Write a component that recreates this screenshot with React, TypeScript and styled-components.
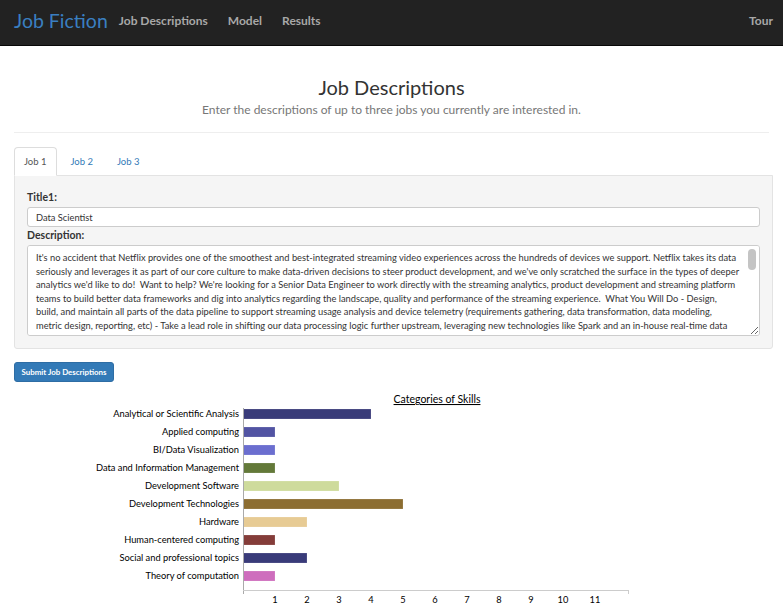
import React, { useState } from "react";
import styled, { createGlobalStyle } from "styled-components";

const Global = createGlobalStyle`
  html, body { margin: 0; padding: 0; background: #fff; }
  body { font-family: Lato, "Open Sans", sans-serif; color: #333; }
  * { box-sizing: border-box; }
`;

const NavBar = styled.nav`
  height: 46px;
  background: #222;
  border-bottom: 1px solid #080808;
  display: flex;
  align-items: center;
  padding: 0 10px 4px 14px;
`;
const Brand = styled.a`
  font-size: 19.5px;
  color: #3a7fc1;
  text-decoration: none;
  margin-right: 1px;
`;
const NavLink = styled.a<{ $right?: boolean }>`
  font-size: 12px;
  font-weight: 700;
  color: #a8a8a8;
  padding: 0 10px;
  text-decoration: none;
  margin-left: ${(p) => (p.$right ? "auto" : "0")};
  &:last-child {
    padding-right: 0;
  }
`;

const Container = styled.main`
  padding: 0 10px 0 14px;
`;
const Header = styled.header`
  text-align: center;
  padding-top: 27px;
  padding-bottom: 13px;
  border-bottom: 1px solid #eee;
  margin-right: 4px;
`;
const Title = styled.h1`
  margin: 0;
  font-size: 20px;
  font-weight: 400;
  line-height: 28px;
  color: #333;
`;
const Subtitle = styled.p`
  margin: 0;
  font-size: 12px;
  line-height: 18px;
  color: #777;
`;

const Tabs = styled.ul`
  list-style: none;
  margin: 14px 0 0;
  padding: 0;
  display: flex;
  height: 28px;
`;
const Tab = styled.li<{ $active?: boolean }>`
  height: 29px;
  padding: 0 9px;
  margin-right: 4px;
  display: flex;
  align-items: center;
  font-size: 9.5px;
  cursor: pointer;
  color: ${(p) => (p.$active ? "#555" : "#337ab7")};
  background: ${(p) => (p.$active ? "#fff" : "transparent")};
  border: 1px solid ${(p) => (p.$active ? "#ddd" : "transparent")};
  border-bottom-color: ${(p) => (p.$active ? "#fff" : "transparent")};
  border-radius: 4px 4px 0 0;
  position: relative;
  z-index: 1;
`;

const Panel = styled.section`
  background: #f5f5f5;
  border: 1px solid #e3e3e3;
  border-radius: 0 0 3px 3px;
  padding: 15px 12px 12px 12px;
  display: flex;
  flex-direction: column;
`;
const Label = styled.label`
  font-size: 10.5px;
  font-weight: 700;
  line-height: 12px;
  color: #333;
  margin-bottom: 4px;
`;
const Input = styled.input`
  height: 20px;
  border: 1px solid #ccc;
  border-radius: 3px;
  background: #fff;
  font-family: Lato, sans-serif;
  font-size: 9.3px;
  color: #333;
  padding: 0 8px;
  margin-bottom: 2px;
  outline: none;
`;
const TextAreaWrap = styled.div`
  position: relative;
  display: flex;
  flex-direction: column;
  &::after {
    content: "";
    position: absolute;
    top: 4px;
    right: 4px;
    width: 8px;
    height: 21px;
    border-radius: 4px;
    background: #c4c4c4;
    pointer-events: none;
  }
`;
const TextArea = styled.textarea`
  height: 91px;
  border: 1px solid #ccc;
  border-radius: 3px;
  background: #fff;
  font-family: Lato, sans-serif;
  font-size: 9.3px;
  line-height: 13.6px;
  color: #333;
  padding: 5px 20px 5px 8px;
  resize: vertical;
  outline: none;
  overflow-y: auto;
`;

const SubmitButton = styled.button`
  margin-top: 13px;
  width: 100px;
  height: 20px;
  background: #337ab7;
  border: 1px solid #2e6da4;
  border-radius: 3px;
  color: #fff;
  font-family: Lato, sans-serif;
  font-size: 7.9px;
  font-weight: 700;
  padding: 0;
`;

const ChartWrap = styled.div`
  margin-top: 6px;
`;

const DESC =
  "It's no accident that Netflix provides one of the smoothest and best-integrated streaming video experiences across the hundreds of devices we support. Netflix takes its data seriously and leverages it as part of our core culture to make data-driven decisions to steer product development, and we've only scratched the surface in the types of deeper analytics we'd like to do!  Want to help? We're looking for a Senior Data Engineer to work directly with the streaming analytics, product development and streaming platform teams to build better data frameworks and dig into analytics regarding the landscape, quality and performance of the streaming experience.  What You Will Do - Design, build, and maintain all parts of the data pipeline to support streaming usage analysis and device telemetry (requirements gathering, data transformation, data modeling, metric design, reporting, etc) - Take a lead role in shifting our data processing logic further upstream, leveraging new technologies like Spark and an in-house real-time data processing framework - Work closely with product managers, data scientists and engineers to understand the data needs of the business.";

const DATA: { label: string; value: number; color: string }[] = [
  { label: "Analytical or Scientific Analysis", value: 4, color: "#393b79" },
  { label: "Applied computing", value: 1, color: "#5254a3" },
  { label: "BI/Data Visualization", value: 1, color: "#6b6ecf" },
  { label: "Data and Information Management", value: 1, color: "#637939" },
  { label: "Development Software", value: 3, color: "#cedb9c" },
  { label: "Development Technologies", value: 5, color: "#8c6d31" },
  { label: "Hardware", value: 2, color: "#e7cb94" },
  { label: "Human-centered computing", value: 1, color: "#843c39" },
  { label: "Social and professional topics", value: 2, color: "#393b79" },
  { label: "Theory of computation", value: 1, color: "#ce6dbd" },
];

function SkillsChart() {
  // svg origin at page x=14, y=388
  const ox = 229; // axis x (243 - 14)
  const unit = 32;
  const top = 26; // first bar center (414 - 388)
  const step = 18;
  const axisY = 202; // 590 - 388
  const ticks = Array.from({ length: 11 }, (_, i) => i + 1);
  return (
    <svg width={640} height={225} style={{ display: "block" }}>
      <text
        x={ox + 194}
        y={15}
        textAnchor="middle"
        fontSize={10.5}
        fontFamily="Lato, sans-serif"
        fill="#000"
        textDecoration="underline"
      >
        Categories of Skills
      </text>
      {DATA.map((d, i) => {
        const cy = top + i * step;
        return (
          <g key={d.label}>
            <text
              x={ox - 4}
              y={cy + 3.3}
              textAnchor="end"
              fontSize={9.3}
              fontFamily="Lato, sans-serif"
              fill="#000"
            >
              {d.label}
            </text>
            <rect
              x={ox}
              y={cy - 5}
              width={d.value * unit}
              height={10}
              fill={d.color}
              stroke="rgba(255,255,255,0.35)"
              strokeWidth={0.5}
            />
          </g>
        );
      })}
      <line x1={ox + 0.5} y1={20} x2={ox + 0.5} y2={axisY + 4} stroke="#aaa" strokeWidth={1} />
      <line x1={ox} y1={axisY + 0.5} x2={ox + 12 * unit + 2} y2={axisY + 0.5} stroke="#ccc" strokeWidth={1} />
      <line x1={ox + 12 * unit + 1.5} y1={axisY} x2={ox + 12 * unit + 1.5} y2={axisY + 4} stroke="#ccc" strokeWidth={1} />
      {ticks.map((t) => (
        <text
          key={t}
          x={ox + t * unit}
          y={axisY + 13}
          textAnchor="middle"
          fontSize={9.3}
          fontFamily="Lato, sans-serif"
          fill="#000"
        >
          {t}
        </text>
      ))}
    </svg>
  );
}

export default function App() {
  const [active, setActive] = useState(0);
  const [title, setTitle] = useState("Data Scientist");
  const [desc, setDesc] = useState(DESC);
  return (
    <>
      <Global />
      <NavBar>
        <Brand href="#">Job Fiction</Brand>
        <NavLink href="#">Job Descriptions</NavLink>
        <NavLink href="#">Model</NavLink>
        <NavLink href="#">Results</NavLink>
        <NavLink href="#" $right>
          Tour
        </NavLink>
      </NavBar>
      <Container>
        <Header>
          <Title>Job Descriptions</Title>
          <Subtitle>Enter the descriptions of up to three jobs you currently are interested in.</Subtitle>
        </Header>
        <Tabs>
          {["Job 1", "Job 2", "Job 3"].map((t, i) => (
            <Tab key={t} $active={active === i} onClick={() => setActive(i)}>
              {t}
            </Tab>
          ))}
        </Tabs>
        <Panel>
          <Label>Title1:</Label>
          <Input value={title} onChange={(e) => setTitle(e.target.value)} />
          <Label>Description:</Label>
          <TextAreaWrap>
            <TextArea value={desc} onChange={(e) => setDesc(e.target.value)} spellCheck />
          </TextAreaWrap>
        </Panel>
        <SubmitButton>Submit Job Descriptions</SubmitButton>
        <ChartWrap>
          <SkillsChart />
        </ChartWrap>
      </Container>
    </>
  );
}
